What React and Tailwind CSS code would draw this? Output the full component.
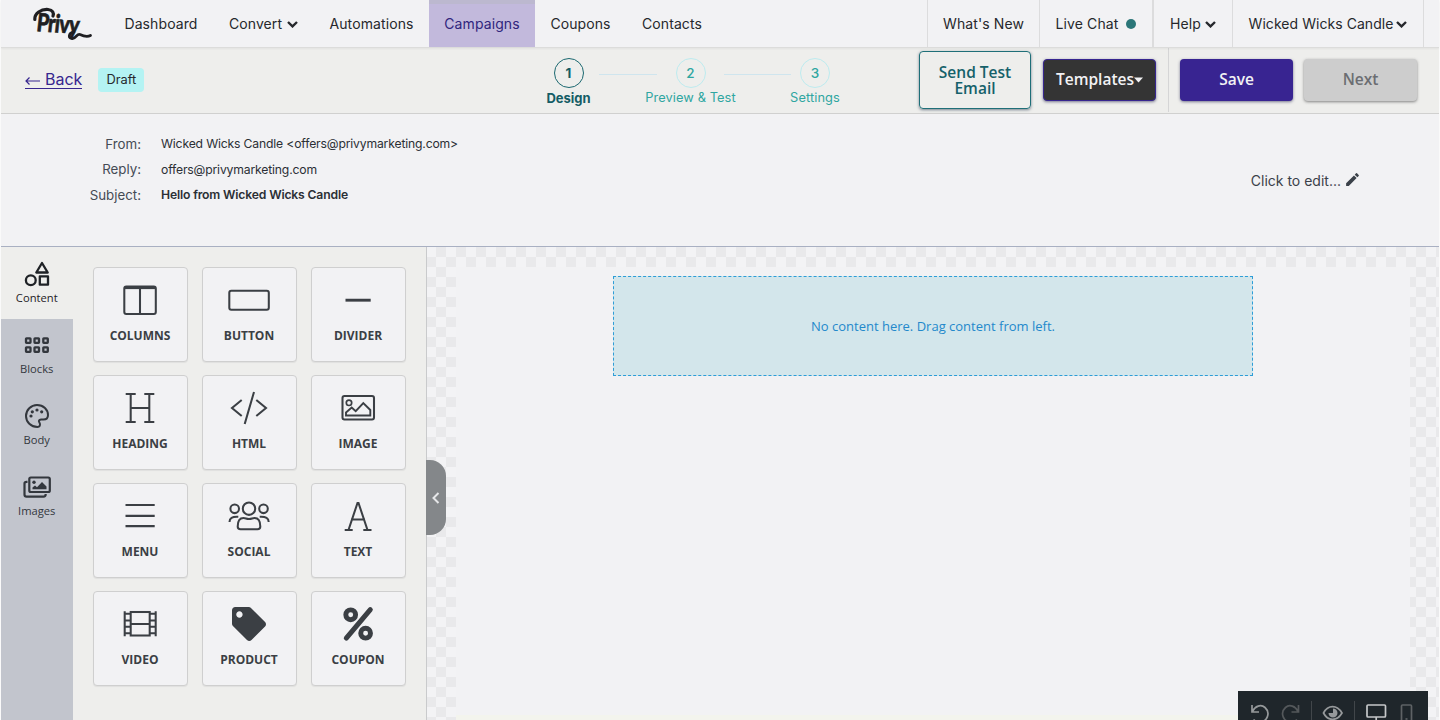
import { FaTag } from "react-icons/fa";
import { MdEdit } from "react-icons/md";

function Caret() {
  return (
    <svg className="mt-0.5 h-[7px] w-[11px] shrink-0" viewBox="0 0 11 7" fill="none" stroke="currentColor" strokeWidth="2.4">
      <path d="M1 1 L5.5 5.4 L10 1" />
    </svg>
  );
}

function Logo() {
  return (
    <div className="relative h-[47px] w-[108px] shrink-0 text-[#1f1f22]">
      <span className="absolute left-[36px] top-[4px] origin-left -skew-x-3 rotate-[4deg] scale-x-[0.78] text-[25px] leading-[34px] font-black tracking-[-0.8px] [-webkit-text-stroke:0.7px_#1f1f22] font-['Lato',sans-serif]">
        Privy
      </span>
      <svg className="absolute left-[31px] top-[7px] h-[34px] w-[62px]" viewBox="0 0 62 34" fill="none" stroke="currentColor" strokeLinecap="round">
        <path d="M2.8 12.500 C2.500 6.500 9 2 16 2.500 C21 3 22 6 21 9" strokeWidth="3.200" />
        <path d="M42 25 C36 26 36 32 40.500 31.500 C45 31 44.500 26.500 48 27.500 C52 29.500 55 30.500 58.500 28.500" strokeWidth="2.800" />
      </svg>
    </div>
  );
}

function NavItem({ className, children }) {
  return <div className={`flex h-[47px] shrink-0 items-center justify-center ${className}`}>{children}</div>;
}

function TopNav() {
  return (
    <header className="relative flex h-12 shrink-0 border-b border-[#dcdcdb] bg-[#f2f2f4] text-[14px] tracking-[0.1px] text-[#26282c] shadow-[0_1px_2px_rgba(0,0,0,0.05)]">
      <Logo />
      <nav className="flex">
        <NavItem className="w-[104px]">Dashboard</NavItem>
        <NavItem className="w-[101px] gap-[5px]">Convert<Caret /></NavItem>
        <NavItem className="w-[115px]">Automations</NavItem>
        <NavItem className="w-[106px] border-t-4 border-[#bcb8cf] bg-[#c2b9dc] pb-1 text-[#30257d]">Campaigns</NavItem>
        <NavItem className="w-[91px]">Coupons</NavItem>
        <NavItem className="w-[92px]">Contacts</NavItem>
      </nav>
      <div className="ml-auto flex">
        <NavItem className="w-[112px] border-l border-[#dcdcdd]">What's New</NavItem>
        <NavItem className="w-[113px] gap-2 border-l border-[#dcdcdd]">
          Live Chat
          <span className="size-2.5 rounded-full bg-[#2b7678]" />
        </NavItem>
        <NavItem className="w-20 gap-1 border-l-2 border-[#dcdcdd]">Help<Caret /></NavItem>
        <NavItem className="w-[192px] gap-[3px] border-x border-[#dcdcdd] tracking-[0.05px]">Wicked Wicks Candle<Caret /></NavItem>
        <div className="w-[15px]" />
      </div>
    </header>
  );
}

function Step({ n, label, active, className }) {
  return (
    <div className={`flex shrink-0 flex-col items-center ${className}`}>
      <div
        className={
          active
            ? "flex size-[30px] items-center justify-center rounded-full border border-[#1b6870] text-[13.500px] font-bold text-[#145c65]"
            : "flex size-[30px] items-center justify-center rounded-full border border-[#bdebef] text-[13.500px] font-medium text-[#2fa6a1]"
        }
      >
        {n}
      </div>
      <div className={active ? "mt-0.5 text-[13px] leading-4 font-bold text-[#145c65]" : "mt-0.5 text-[12.800px] leading-4 tracking-[0.1px] text-[#2fa6a1]"}>
        {label}
      </div>
    </div>
  );
}

function ActionBar() {
  return (
    <div className="flex h-[66px] shrink-0 border-b border-[#d0d0cf] bg-[#eeeeec]">
      <div className="flex w-[537px] items-center pl-6 pb-0.5">
        <a className="flex items-center gap-1 text-[16px] text-[#37268f]">
          <span className="flex border-b border-[#37268f] leading-[18px]">
            <svg className="mt-[5px] mr-[5px] h-3 w-[15px]" viewBox="0 0 15 12" fill="none" stroke="currentColor" strokeWidth="1.200">
              <path d="M15 6 H1 M4.500 2.500 L1 6 L4.500 9.500" />
            </svg>
            Back
          </span>
        </a>
        <span className="ml-4 flex h-6 w-[46px] items-center justify-center rounded bg-[#b4f3f3] text-[12.800px] text-[#26282c]">Draft</span>
      </div>
      <div className="flex pt-2.5">
        <Step n="1" label="Design" active className="w-[61px]" />
        <div className="mt-4 h-px w-[58px] bg-[#cfe5ee]" />
        <Step n="2" label="Preview & Test" className="mx-[-16px] w-[99px]" />
        <div className="mt-4 h-px w-[67px] bg-[#cfe5ee]" />
        <Step n="3" label="Settings" className="ml-[-1px] w-[50px]" />
      </div>
      <div className="ml-auto flex text-[16px] font-semibold font-['Open_Sans',sans-serif]">
        <button className="mt-[3px] mr-3 h-[58px] w-[112px] rounded border border-[#1f6f78] px-4 pb-px text-[15.500px] leading-4 text-[#15616a] shadow-[0_1px_3px_rgba(40,60,80,0.6)]">
          Send Test Email
        </button>
        <button className="mt-[11px] flex h-[42px] w-[113px] items-center justify-center rounded border border-[#37268f] bg-[#343434] pb-px text-[15.500px] text-[#f2f2f4] shadow-[0_1px_3px_rgba(40,40,80,0.6)]">
          Templates
          <svg className="mt-px h-[6px] w-[9px]" viewBox="0 0 9 6" fill="currentColor"><path d="M0 .5h9L4.500 5.500z" /></svg>
        </button>
        <div className="mx-[11.500px] h-16 w-px bg-[#d5d5d6]" />
        <button className="mt-[11px] mr-[11px] h-[42px] w-[113px] rounded bg-[#382491] pb-px text-[15.500px] text-[#f2f2f4] shadow-[0_1px_3px_rgba(40,40,80,0.6)]">Save</button>
        <button className="mt-[11px] mr-[22px] h-[42px] w-[113px] rounded bg-[#cdcdcd] pb-px text-[15.500px] text-[#6b6d72] shadow-[0_1px_3px_rgba(60,60,60,0.6)]">Next</button>
      </div>
    </div>
  );
}

const details = [
  ["From:", "Wicked Wicks Candle <offers@privymarketing.com>", ""],
  ["Reply:", "offers@privymarketing.com", ""],
  ["Subject:", "Hello from Wicked Wicks Candle", "font-semibold"],
];

function EmailDetails() {
  return (
    <section className="flex h-[133px] shrink-0 items-center justify-between border-b border-[#a9b0c2] bg-[#f2f2f4] text-[#2b2f35]">
      <div className="mb-5">
        {details.map(([k, v, cls]) => (
          <div key={k} className="flex h-[25.500px] items-center">
            <span className="w-[140px] text-right text-[13.300px] text-[#454b54]">{k}</span>
            <span className={`ml-5 text-[12.200px] tracking-[-0.170px] ${cls}`}>{v}</span>
          </div>
        ))}
      </div>
      <div className="mr-[78px] flex items-center gap-[3px] text-[14px] text-[#3b4149]">
        Click to edit...
        <MdEdit className="-mt-0.5 size-[17px]" />
      </div>
    </section>
  );
}

const icons = {
  columns: (
    <>
      <rect x="-15.700" y="-13.500" width="31.500" height="27.500" rx="2" />
      <path d="M0 -13 V14 M-15 -12.500 H15" />
      <path d="M-15 -12.300 H15" strokeWidth="2.800" />
    </>
  ),
  button: <rect x="-19.700" y="-9.300" width="39.500" height="19" rx="2" />,
  divider: <path d="M-12.500 .2 H12.700" strokeWidth="2.900" />,
  heading: <path d="M-9.300 -14 V14 M9.300 -14 V14 M-9.300 0 H9.300 M-14.300 -14 H-4.300 M4.300 -14 H14.300 M-14.300 14 H-4.300 M4.300 14 H14.300" />,
  html: <path d="M5 -16 L-4.300 16 M-7.300 -8 L-17 0 L-7.300 8 M7.300 -8 L17 0 L7.300 8" />,
  image: (
    <>
      <rect x="-15.500" y="-12" width="31.500" height="23.500" rx="2" />
      <circle cx="-9" cy="-5.200" r="2.700" strokeWidth="1.700" />
      <path d="M-12 4.500 L-6.300 -.5 L-2.300 3.200 L5.300 -5 L12.300 2 V7.500 H-12 Z" strokeWidth="1.900" />
    </>
  ),
  menu: <path d="M-14.500 -11 H14.700 M-14.500 -.2 H14.700 M-14.500 10.200 H14.700" strokeWidth="2.200" />,
  social: (
    <>
      <circle cx="0" cy="-7.300" r="6.200" />
      <circle cx="-14.300" cy="-7.200" r="4.300" />
      <circle cx="14.500" cy="-7.200" r="4.300" />
      <path d="M-8.500 13.300 C-10.500 13.300 -11.300 12.500 -11.300 10.500 C-11.300 5 -9.500 2 -5.500 2 C-3 2 -3 3 0 3 C3 3 3 2 5.500 2 C9.500 2 11.300 5 11.300 10.500 C11.300 12.500 10.500 13.300 8.500 13.300 Z" />
      <path d="M-19.500 6 C-19.500 2 -17 .5 -10.700 .8 M19.700 6 C19.700 2 17 .5 10.700 .8" />
    </>
  ),
  text: <path d="M-9.500 14 L-.5 -13 H.5 L9.500 14 M-7 3.500 H7 M-13.300 14 H-5.300 M5.300 14 H13.500" />,
  video: (
    <>
      <rect x="-9.300" y="-12" width="19" height="23.500" />
      <path d="M-15.300 -12.800 V12.300 M15.700 -12.800 V12.300 M-9.300 0 H9.700 M-15.300 -10.300 H-9.300 M-15.300 -3.500 H-9.300 M-15.300 2.800 H-9.300 M-15.300 9.300 H-9.300 M9.700 -10.300 H15.700 M9.700 -3.500 H15.700 M9.700 2.800 H15.700 M9.700 9.300 H15.700" />
    </>
  ),
  coupon: (
    <>
      <circle cx="-7.300" cy="-9.200" r="4.900" strokeWidth="4.900" />
      <circle cx="7.600" cy="9.200" r="4.900" strokeWidth="4.900" />
      <path d="M12.300 -14.400 L-11.700 14.100" strokeWidth="5" strokeLinecap="round" />
    </>
  ),
};

const tiles = ["columns", "button", "divider", "heading", "html", "image", "menu", "social", "text", "video", "product", "coupon"];

function Tile({ id }) {
  return (
    <div className="flex h-[95px] flex-col items-center rounded border border-[#cfcfcf] bg-[#f2f2f4] pt-3 text-[#3b3f44] shadow-[0_1px_1px_rgba(0,0,0,0.06)]">
      {id === "product" ? (
        <div className="flex h-10 items-center"><FaTag className="size-[34px]" /></div>
      ) : (
        <svg className="h-10 w-12" viewBox="-24 -20 48 40" fill="none" stroke="currentColor" strokeWidth="2.050">{icons[id]}</svg>
      )}
      <span className="mt-2 text-[12px] leading-4 font-bold uppercase">{id}</span>
    </div>
  );
}

const tabs = [
  ["Content", (
    <g key="c" strokeWidth="2.300" strokeLinejoin="round">
      <path d="M5 -11 L10.700 -1.500 H-.7 Z" />
      <circle cx="-6.200" cy="6.300" r="4.900" />
      <rect x="2.800" y="2.400" width="8.200" height="8.300" />
    </g>
  )],
  ["Blocks", (
    <g key="b" strokeWidth="2.300">
      {[-9, -.5, 8.300].map((x) => [-4.700, 4.300].map((y) => <rect key={`${x}${y}`} x={x - 2} y={y - 2} width="4.500" height="4.500" rx=".5" />))}
    </g>
  )],
  ["Body", (
    <g key="p" strokeWidth="2">
      <path d="M0 -11 C6.500 -11 11 -6.500 11 -1 C11 2 9 3.500 6.500 3.500 H4 C2 3.500 1.300 5 2.500 6.700 C4 9 2.500 11 .5 11 C-6 11 -11 6 -11 0 C-11 -6 -6 -11 0 -11 Z" />
      <g fill="currentColor" stroke="none">
        <circle cx="-6" cy="0" r="1.600" /><circle cx="-4.700" cy="-4.200" r="1.600" /><circle cx="0" cy="-6" r="1.600" /><circle cx="4.700" cy="-4.200" r="1.600" />
      </g>
    </g>
  )],
  ["Images", (
    <g key="i" strokeWidth="2.200">
      <rect x="-7.700" y="-9.500" width="20.500" height="14.500" rx="1.500" />
      <path d="M-9.500 -5.200 H-10.500 Q-12.500 -5.200 -12.500 -3.500 V7.500 Q-12.500 9.700 -10.500 9.700 H6.500 Q8.700 9.700 8.700 7" />
      <path d="M-4.500 2.200 V.5 L-2 -1.500 L0 .2 L5 -5 L9.500 -.5 V2.200 Z" fill="currentColor" stroke="none" />
      <circle cx="-3" cy="-4.800" r="1.700" fill="currentColor" stroke="none" />
    </g>
  )],
];

function Sidebar() {
  return (
    <aside className="relative flex w-[425.500px] shrink-0 border-r border-[#c9cacc] bg-[#eeeeec] font-['Open_Sans',sans-serif]">
      <div className="flex w-[71.500px] shrink-0 flex-col bg-[#c2c5cd]">
        {tabs.map(([name, icon], i) => (
          <div key={name} className={i === 0 ? "flex h-[72px] flex-col items-center bg-[#eeeeec] pt-[13px] text-[#1f2226]" : "flex h-[71px] flex-col items-center pt-3 text-[#33373d]"}>
            <svg className="h-7 w-8" viewBox="-16 -14 32 28" fill="none" stroke="currentColor">{icon}</svg>
            <span className="mt-[2.400px] text-[11.200px] leading-4">{name}</span>
          </div>
        ))}
      </div>
      <div className="grid flex-1 grid-cols-[95px_95px_95px] content-start gap-x-3.5 gap-y-[13px] pt-5 pl-5">
        {tiles.map((id) => <Tile key={id} id={id} />)}
      </div>
      <div className="absolute top-[213px] -right-5 z-10 flex h-[75px] w-5 items-center justify-center rounded-r-2xl bg-[#84878a] text-[#e6e7e9]">
        <svg className="h-3 w-2" viewBox="0 0 8 12" fill="none" stroke="currentColor" strokeWidth="2"><path d="M6.500 1 L1.500 6 L6.500 11" /></svg>
      </div>
    </aside>
  );
}

function PreviewToolbar() {
  return (
    <div className="absolute right-[11px] bottom-0 h-[29px] w-[190px] overflow-hidden bg-[#1f262b]">
      <svg className="h-[44px] w-[190px]" viewBox="0 0 190 44" fill="none" strokeWidth="1.700">
        <g stroke="#96999b">
          <path d="M14 14 V21 H21 M14.500 20.500 C17 15 23 13 27 16.500 C33 22 29 31 21.500 31 C19 31 17 30 15.500 28.500" />
          <path d="M85.500 22 C90 13.500 99 13.500 104 22 C99 30.500 90 30.500 85.500 22 Z" />
          <path d="M95 17.500 V22 H90.500 A4.500 4.500 0 1 0 95 17.500 Z" fill="#96999b" stroke="none" />
        </g>
        <path d="M60.500 14 V21 H53.500 M60 20.500 C57.500 15 51.500 13 47.500 16.500 C41.500 22 45.500 31 53 31 C55.500 31 57.500 30 59 28.500" stroke="#54585b" />
        <path d="M73.500 10 V34 M116.500 10 V34" stroke="#41464a" strokeWidth="1" />
        <g stroke="#c6c8ca"><rect x="129" y="14" width="18.500" height="12" rx="1" /><path d="M138.200 26 V30 M134 30.500 H143" /></g>
        <g stroke="#5e6265"><rect x="163.500" y="14" width="10" height="17" rx="1" /><path d="M167.500 28 H169.500" /></g>
      </svg>
    </div>
  );
}

function Canvas() {
  return (
    <main className="relative flex flex-1 flex-col bg-[repeating-conic-gradient(#e9e9eb_0_25%,#f3f3f5_0_50%)] bg-[length:20px_20px] bg-[position:-1px_0px] pt-5 pr-[29px] pl-[29.500px] font-['Open_Sans',sans-serif]">
      <div className="flex flex-1 flex-col bg-[#f2f2f4]">
        <div className="mt-[9px] ml-[157px] flex h-[100px] w-[640px] items-center justify-center border border-dashed border-[#2d9dd7] bg-[#d3e6eb] pt-0.5 text-[13px] text-[#2389cb]">
          No content here. Drag content from left.
        </div>
        <div className="mt-auto h-[5px] bg-[#f3f4ed]" />
      </div>
      <PreviewToolbar />
    </main>
  );
}

export default function App() {
  return (
    <div className="flex h-[720px] w-[1440px] flex-col overflow-hidden bg-[#fafafa] px-px font-['Inter',sans-serif]">
      <TopNav />
      <ActionBar />
      <EmailDetails />
      <div className="flex min-h-0 flex-1">
        <Sidebar />
        <Canvas />
      </div>
    </div>
  );
}
